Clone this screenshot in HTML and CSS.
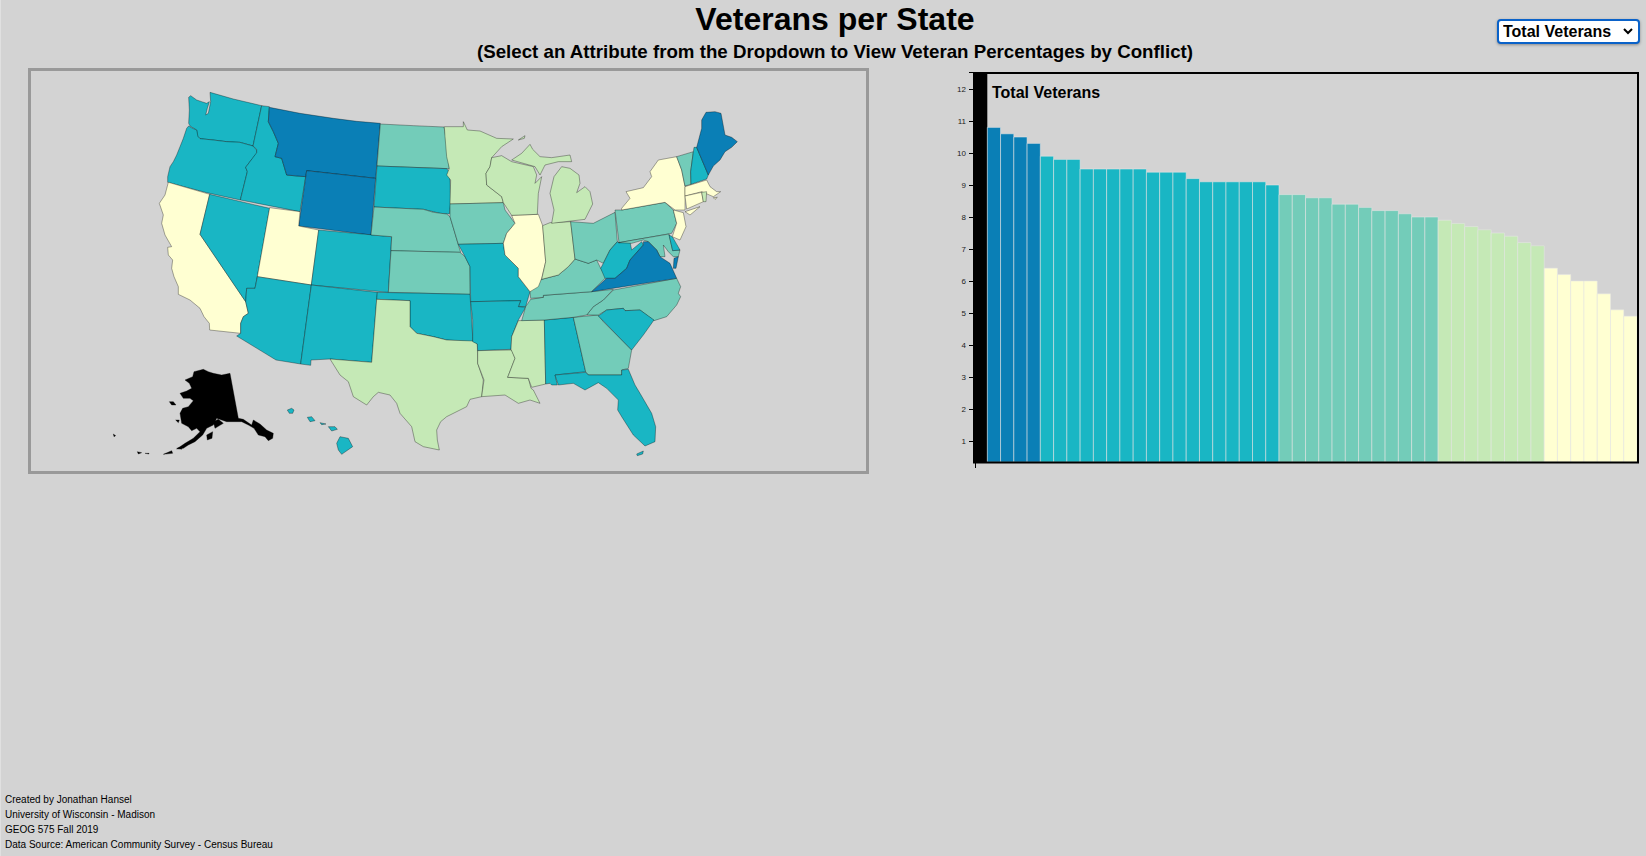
FILE: index.html
```html
<!DOCTYPE html>
<html>

<head>
    <meta charset="UTF-8">
    <meta name="viewport" content="width=device-width, initial-scale=1.0">
    <title>Veterans per State</title>
    <link rel="stylesheet" href="styles.css">
</head>

<body>
    <div class="header">
        <div class="titles">
            <h1>Veterans per State</h1>
            <h3>(Select an Attribute from the Dropdown to View Veteran Percentages by Conflict)</h3>
        </div>
        <select class="dropdown">
            <option>Total Veterans</option>
        </select>
    </div>

    <div class="main">
        <!-- map: coordinates are 3x screen pixels -->
        <svg class="map" viewBox="93 33 2505 1200">
            <g class="states">
                <!-- west -->
                <path class="q4" d="M566,112 572,107 590,120 605,125 620,130 628,125 622,145 617,165 625,160 632,125 630,97 700,117 785,137 759,258 720,247 680,245 640,240 600,236 592,228 590,210 570,198 566,190 568,150z"/>
                <path class="q4" d="M566,198 578,205 590,210 594,230 600,236 640,240 680,245 720,247 759,258 770,270 770,280 750,305 737,322 742,335 721,420 620,398 503,367 503,350 510,320 520,305 530,285 540,260 550,235 560,205z"/>
                <path class="q1" d="M505,367 629,403 600,523 737,725 745,760 730,770 722,790 722,820 629,810 628,790 612,770 600,745 570,720 535,703 535,680 522,650 515,625 518,600 505,585 503,562 515,560 495,525 485,490 490,465 478,430 495,405z"/>
                <path class="q4" d="M629,403 809,445 772,650 765,685 740,685 737,725 600,523z"/>
                <path class="q4" d="M785,137 808,140 805,185 820,215 835,250 825,290 845,295 860,345 890,348 917,350 900,455 721,420 742,335 737,322 770,278 770,268 759,258z"/>
                <path class="q5" d="M808,142 900,160 1000,175 1070,184 1141,190 1127,355 920,332 917,350 860,345 845,295 825,290 835,250 820,215 805,185z"/>
                <path class="q5" d="M920,332 1127,355 1113,525 896,498z"/>
                <path class="q1" d="M809,443 900,455 896,498 956,510 934,675 772,650z"/>
                <path class="q4" d="M956,510 1175,530 1165,697 934,675z"/>
                <path class="q4" d="M772,650 934,675 902,912 828,900 710,828 722,820 722,790 730,770 745,760 737,725 740,685 765,685z"/>
                <path class="q4" d="M934,675 1132,697 1115,907 990,897 933,900 932,916 902,912z"/>
                <path class="q3" d="M1141,192 1240,197 1332,201 1337,230 1345,290 1348,326 1131,318z"/>
                <path class="q4" d="M1131,318 1340,326 1348,335 1342,345 1350,352 1352,430 1348,462 1320,460 1300,455 1270,448 1122,441z"/>
                <path class="q3" d="M1122,441 1270,448 1300,457 1340,462 1350,470 1365,520 1375,555 1382,577 1173,572 1175,530 1113,525z"/>
                <path class="q3" d="M1173,572 1380,577 1395,590 1410,620 1410,703 1165,697z"/>
                <path class="q4" d="M1132,697 1410,703 1418,830 1418,845 1340,840 1300,830 1250,820 1230,800 1230,722 1130,718z"/>
                <path class="q2" d="M1130,718 1230,722 1230,800 1250,820 1300,830 1340,840 1420,843 1432,852 1433,910 1450,960 1445,1010 1410,1018 1400,1040 1340,1070 1322,1085 1310,1110 1312,1140 1318,1170 1270,1160 1245,1145 1235,1100 1200,1060 1190,1030 1170,1005 1135,997 1120,1010 1100,1035 1060,1010 1045,965 1020,945 990,897 1115,907z"/>

                <!-- alaska -->
                <path class="nodata" d="M555,960 578,950 582,935 610,928 625,935 640,940 665,945 690,940 715,1075 730,1078 755,1095 760,1080 780,1092 800,1110 820,1120 818,1135 805,1142 795,1130 775,1125 762,1105 745,1095 725,1085 680,1085 665,1080 650,1075 640,1095 620,1105 608,1125 585,1145 565,1155 550,1165 530,1167 555,1150 580,1135 600,1115 590,1105 575,1112 565,1100 545,1090 540,1060 548,1045 565,1040 580,1022 570,1015 550,1015 540,1000 560,993 575,985 568,970z"/>
                <path class="nodata" d="M620,1125 638,1115 636,1135 622,1140zM640,1085 655,1078 670,1090 645,1105zM490,1183 515,1172 518,1180zM530,1165 545,1160 545,1168zM412,1175 425,1178 415,1182zM435,1180 447,1180 447,1182zM340,1122 347,1127 342,1130zM508,1025 520,1025 528,1035 515,1035zM527,1080 538,1080 535,1088z"/>
                <!-- hawaii -->
                <path class="q4" d="M1020,1130 1045,1135 1058,1160 1025,1183 1015,1170 1010,1150zM985,1100 1005,1100 1012,1108 995,1113zM960,1088 978,1092 965,1094zM922,1072 935,1070 945,1082 930,1085zM862,1050 875,1045 882,1050 878,1060 868,1060z"/>
            </g>

            <g class="states" transform="translate(1290,0)">
                <!-- east -->
                <path class="q2" d="M43,200 100,200 100,185 112,210 150,213 200,235 250,237 215,260 185,293 180,320 168,340 170,375 215,410 220,428 60,432 62,360 50,345 58,325 50,290 45,230z"/>
                <path class="q3" d="M60,432 220,428 225,450 255,490 230,520 220,550 85,553 75,520 60,470z"/>
                <path class="q4" d="M85,553 220,550 225,585 265,625 265,650 300,695 287,740 265,740 272,722 122,725 120,620 105,590z"/>
                <path class="q4" d="M122,725 272,722 265,740 287,742 265,780 245,830 243,868 143,872 142,852 128,845 128,780z"/>
                <path class="q2" d="M143,872 245,870 255,895 233,952 295,955 303,985 310,990 330,1030 300,1020 265,1030 225,1005 155,1010 162,960 143,910z"/>
                <path class="q2" d="M243,868 245,830 265,782 343,780 347,972 305,982 295,955 233,952 255,895z"/>
                <path class="q4" d="M343,780 430,772 467,935 375,945 382,975 365,975 360,970 347,972z"/>
                <path class="q3" d="M430,772 505,765 520,785 605,870 595,925 575,930 575,945 475,945 467,935z"/>
                <path class="q4" d="M375,945 467,937 475,945 575,945 575,930 595,928 615,975 630,1000 665,1060 677,1100 675,1145 645,1158 610,1125 575,1070 563,1050 565,1020 530,985 505,968 465,990 430,970 385,975zM620,1182 640,1173 638,1182 622,1187z"/>
                <path class="q3" d="M740,655 752,680 745,700 752,710 740,735 710,770 672,782 630,750 585,752 580,745 530,750 505,765 470,765 490,740 520,720 550,690z"/>
                <path class="q4" d="M505,768 530,750 580,745 585,752 630,750 672,780 640,825 605,870z"/>
                <path class="q3" d="M275,782 287,740 302,718 340,712 340,706 485,695 550,688 520,720 490,740 470,765 430,772 343,780z"/>
                <path class="q3" d="M302,715 300,695 335,658 385,645 415,620 435,597 475,610 500,600 512,625 530,650 485,695 340,706 340,712z"/>
                <path class="q1" d="M245,466 325,463 338,497 347,605 335,655 325,680 300,695 265,650 265,625 225,585 220,550 230,520 255,490z"/>
                <path class="q2" d="M338,497 360,488 422,485 435,597 415,620 385,645 335,658 347,605z"/>
                <path class="q3" d="M422,485 490,490 555,457 562,545 540,570 520,610 500,600 475,610 435,597z"/>
                <path class="q2" d="M365,490 372,450 360,400 372,350 395,320 420,325 447,345 450,370 440,398 465,380 480,395 488,432 465,478z"/>
                <path class="q2" d="M245,300 275,280 300,253 308,268 330,290 365,293 420,285 425,305 385,305 345,315 330,345 315,320zM265,240 285,227 283,235z"/>
                <path class="q2" d="M185,293 215,287 245,305 310,320 320,345 315,370 335,350 325,400 322,463 245,466 220,428 215,410 170,375 168,340 180,320z"/>
                <path class="q4" d="M540,570 562,545 567,548 600,545 605,570 635,545 640,555 600,600 590,625 555,655 525,655 512,625 520,610z"/>
                <path class="q3" d="M555,450 575,450 705,427 730,450 740,490 725,520 567,548z"/>
                <path class="q3" d="M565,548 717,522 728,572 750,570 745,590 730,590 715,575 700,555 705,590 690,590 680,570 655,545 640,540 605,550z"/>
                <path class="q5" d="M485,695 530,655 555,655 590,625 600,600 640,555 640,545 655,545 680,570 690,590 720,610 740,655zM730,625 732,595 745,590 738,625z"/>
                <path class="q4" d="M717,525 727,530 750,570 728,572z"/>
                <path class="q1" d="M575,445 600,415 588,395 640,383 665,350 660,335 685,300 740,290 755,330 765,380 765,450 735,450 705,427 575,450zM765,455 810,440 780,465z"/>
                <path class="q1" d="M730,450 760,458 768,500 750,540 727,530 740,490z"/>
                <path class="q3" d="M740,290 790,275 782,335 783,373 765,378 755,330z"/>
                <path class="q4" d="M792,262 800,262 835,345 830,357 783,373 782,335z"/>
                <path class="q5" d="M800,262 815,205 815,180 828,157 855,155 873,160 885,225 905,232 922,245 905,262 885,275 870,300 850,318 835,345z"/>
                <path class="q1" d="M765,380 830,360 840,380 860,395 872,395 850,410 815,395 765,408zM850,413 862,412 855,418z"/>
                <path class="q1" d="M765,408 815,397 820,425 770,447z"/>
                <path class="q2" d="M815,397 830,395 828,425 820,425z"/>
            </g>
        </svg>

        <!-- chart: coordinates are screen pixels -->
        <svg class="chart" viewBox="950 68 696 406">
            <g transform="translate(987.3,473) scale(13.26,-32)">
                <rect class="nodata" x="-1" y="0.34" width="1" height="12.19"/>
                <rect class="q5 bar" x="0" y="0.34" width="1" height="10.46"/>
                <rect class="q5 bar" x="1" y="0.34" width="1" height="10.26"/>
                <rect class="q5 bar" x="2" y="0.34" width="1" height="10.16"/>
                <rect class="q5 bar" x="3" y="0.34" width="1" height="9.96"/>
                <rect class="q4 bar" x="4" y="0.34" width="1" height="9.56"/>
                <rect class="q4 bar" x="5" y="0.34" width="1" height="9.46"/>
                <rect class="q4 bar" x="6" y="0.34" width="1" height="9.46"/>
                <rect class="q4 bar" x="7" y="0.34" width="1" height="9.16"/>
                <rect class="q4 bar" x="8" y="0.34" width="1" height="9.16"/>
                <rect class="q4 bar" x="9" y="0.34" width="1" height="9.16"/>
                <rect class="q4 bar" x="10" y="0.34" width="1" height="9.16"/>
                <rect class="q4 bar" x="11" y="0.34" width="1" height="9.16"/>
                <rect class="q4 bar" x="12" y="0.34" width="1" height="9.06"/>
                <rect class="q4 bar" x="13" y="0.34" width="1" height="9.06"/>
                <rect class="q4 bar" x="14" y="0.34" width="1" height="9.06"/>
                <rect class="q4 bar" x="15" y="0.34" width="1" height="8.86"/>
                <rect class="q4 bar" x="16" y="0.34" width="1" height="8.76"/>
                <rect class="q4 bar" x="17" y="0.34" width="1" height="8.76"/>
                <rect class="q4 bar" x="18" y="0.34" width="1" height="8.76"/>
                <rect class="q4 bar" x="19" y="0.34" width="1" height="8.76"/>
                <rect class="q4 bar" x="20" y="0.34" width="1" height="8.76"/>
                <rect class="q4 bar" x="21" y="0.34" width="1" height="8.66"/>
                <rect class="q3 bar" x="22" y="0.34" width="1" height="8.36"/>
                <rect class="q3 bar" x="23" y="0.34" width="1" height="8.36"/>
                <rect class="q3 bar" x="24" y="0.34" width="1" height="8.26"/>
                <rect class="q3 bar" x="25" y="0.34" width="1" height="8.26"/>
                <rect class="q3 bar" x="26" y="0.34" width="1" height="8.06"/>
                <rect class="q3 bar" x="27" y="0.34" width="1" height="8.06"/>
                <rect class="q3 bar" x="28" y="0.34" width="1" height="7.96"/>
                <rect class="q3 bar" x="29" y="0.34" width="1" height="7.86"/>
                <rect class="q3 bar" x="30" y="0.34" width="1" height="7.86"/>
                <rect class="q3 bar" x="31" y="0.34" width="1" height="7.76"/>
                <rect class="q3 bar" x="32" y="0.34" width="1" height="7.66"/>
                <rect class="q3 bar" x="33" y="0.34" width="1" height="7.66"/>
                <rect class="q2 bar" x="34" y="0.34" width="1" height="7.56"/>
                <rect class="q2 bar" x="35" y="0.34" width="1" height="7.46"/>
                <rect class="q2 bar" x="36" y="0.34" width="1" height="7.36"/>
                <rect class="q2 bar" x="37" y="0.34" width="1" height="7.26"/>
                <rect class="q2 bar" x="38" y="0.34" width="1" height="7.16"/>
                <rect class="q2 bar" x="39" y="0.34" width="1" height="7.06"/>
                <rect class="q2 bar" x="40" y="0.34" width="1" height="6.86"/>
                <rect class="q2 bar" x="41" y="0.34" width="1" height="6.76"/>
                <rect class="q1 bar" x="42" y="0.34" width="1" height="6.06"/>
                <rect class="q1 bar" x="43" y="0.34" width="1" height="5.86"/>
                <rect class="q1 bar" x="44" y="0.34" width="1" height="5.66"/>
                <rect class="q1 bar" x="45" y="0.34" width="1" height="5.66"/>
                <rect class="q1 bar" x="46" y="0.34" width="1" height="5.26"/>
                <rect class="q1 bar" x="47" y="0.34" width="1" height="4.76"/>
                <rect class="q1 bar" x="48" y="0.34" width="1" height="4.56"/>
            </g>

            <rect class="frame" x="974" y="73" width="664" height="389.5"/>

            <path class="axis" d="M974,73V463M969,72.5H974M969,89.5H974M969,121.5H974M969,153.5H974M969,185.5H974M969,217.5H974M969,249.5H974M969,281.5H974M969,313.5H974M969,345.5H974M969,377.5H974M969,409.5H974M969,441.5H974M975.5,463V468"/>
            <g class="ticks">
                <text x="966" y="92">12</text>
                <text x="966" y="124">11</text>
                <text x="966" y="156">10</text>
                <text x="966" y="188">9</text>
                <text x="966" y="220">8</text>
                <text x="966" y="252">7</text>
                <text x="966" y="284">6</text>
                <text x="966" y="316">5</text>
                <text x="966" y="348">4</text>
                <text x="966" y="380">3</text>
                <text x="966" y="412">2</text>
                <text x="966" y="444">1</text>
            </g>

            <text class="chart-title" x="992" y="98">Total Veterans</text>
        </svg>
    </div>

    <div class="footer">
        <p>Created by Jonathan Hansel</p>
        <p>University of Wisconsin - Madison</p>
        <p>GEOG 575 Fall 2019</p>
        <p>Data Source: American Community Survey - Census Bureau</p>
    </div>
</body>

</html>
```

FILE: styles.css
```css
/* Basic reset */
* {
    margin: 0;
    padding: 0;
    box-sizing: border-box;
    font-family: "Liberation Sans", Arial, sans-serif;
}

body {
    height: 856px;
    display: flex;
    flex-direction: column;
    background-color: #d3d3d3;
    border-left: 1px solid #e0e0e0;
    color: #000;
    overflow: hidden;
}

.header {
    height: 68px;
    display: grid;
    grid-template-columns: 1fr auto 1fr;
    padding: 0 6px 0 29px;
}

.titles {
    grid-column: 2;
    text-align: center;
}

h1 {
    font-size: 32px;
    line-height: 37px;
    margin-top: 1px;
}

h3 {
    font-size: 18.72px;
    line-height: 22px;
    margin-top: 3px;
}

.dropdown {
    grid-column: 3;
    justify-self: end;
    width: 143px;
    height: 25px;
    margin-top: 19px;
    padding-left: 4px;
    appearance: none;
    font-size: 16px;
    font-weight: bold;
    color: #000;
    background: #fff url("data:image/svg+xml,%3Csvg xmlns='http://www.w3.org/2000/svg' width='10' height='7'%3E%3Cpath d='M1 1l4 4 4-4' fill='none' stroke='%23000' stroke-width='2'/%3E%3C/svg%3E") no-repeat right 5px center;
    border: 2px solid #0a62c9;
    border-radius: 4px;
    box-shadow: 0 1px 3px rgba(0, 0, 0, 0.35);
}

.main {
    display: flex;
    align-items: flex-start;
    padding-left: 27px;
}

.map {
    width: 841px;
    height: 406px;
    border: 3px solid #999;
    flex: none;
}

.chart {
    width: 696px;
    height: 406px;
    margin-left: 81px;
    flex: none;
}

/* quantile colors, low to high */
.q1 { fill: #ffffd2; }
.q2 { fill: #c5e9b6; }
.q3 { fill: #73ccb9; }
.q4 { fill: #19b6c4; }
.q5 { fill: #0a7fb6; }
.nodata { fill: #000; }

.states path {
    stroke: #000;
    stroke-opacity: 0.55;
    stroke-width: 1.8;
    stroke-linejoin: round;
}

.bar {
    stroke: rgba(230, 230, 230, 0.55);
    stroke-width: 1;
    vector-effect: non-scaling-stroke;
}

.frame {
    fill: none;
    stroke: #000;
    stroke-width: 2;
}

.axis {
    fill: none;
    stroke: #000;
    stroke-width: 1;
}

.ticks text {
    font-size: 8px;
    text-anchor: end;
    fill: #222;
}

.chart-title {
    font-size: 16px;
    font-weight: bold;
}

.footer {
    margin-top: auto;
    padding: 0 0 4px 4px;
    font-size: 10px;
    line-height: 15px;
}
```
